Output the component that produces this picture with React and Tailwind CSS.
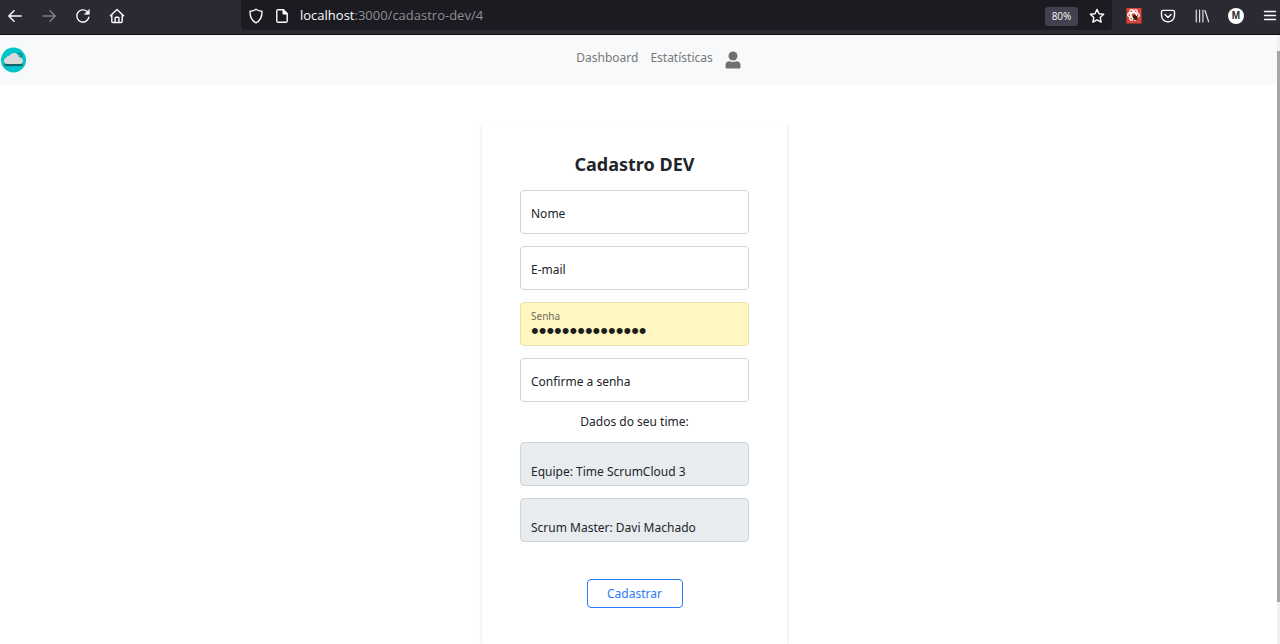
import React from "react";

const stroke = {
  fill: "none",
  stroke: "currentColor",
  strokeWidth: 1.4,
  strokeLinecap: "round",
  strokeLinejoin: "round",
};

function Icon({ children, className = "" }) {
  return (
    <svg viewBox="0 0 16 16" className={"size-4 shrink-0 " + className} {...stroke} aria-hidden="true">
      {children}
    </svg>
  );
}

function BrowserButton({ label, children, className = "" }) {
  return (
    <button type="button" aria-label={label} className={"shrink-0 text-[#fbfbfe] " + className}>
      {children}
    </button>
  );
}

function BrowserBar() {
  return (
    <header className="flex h-[35px] items-start border-b border-[#0c0c0d] bg-[#2b2a33] pr-[2px] pl-[7px]">
      <div className="flex h-8 items-center gap-[18px]">
        <BrowserButton label="Voltar">
          <Icon><path d="M14.2 8H1.8M7 2.8 1.8 8 7 13.2" /></Icon>
        </BrowserButton>
        <BrowserButton label="Avançar" className="opacity-40">
          <Icon><path d="M1.8 8h12.4M9 2.8 14.2 8 9 13.2" /></Icon>
        </BrowserButton>
        <BrowserButton label="Recarregar">
          <Icon>
            <path d="M13.9 9.2A6.1 6.1 0 1 1 12 3.4" />
            <path d="M14.3 1.7v4.6H9.7z" fill="currentColor" strokeWidth="0.6" />
          </Icon>
        </BrowserButton>
        <BrowserButton label="Início">
          <Icon>
            <path d="M1.4 7.8 8 1.4l6.6 6.4M2.8 6.8v6.5c0 .7.5 1.2 1.2 1.2h8c.7 0 1.2-.5 1.2-1.2V6.8" />
            <path d="M6.1 14.3V10c0-.5.3-.8.8-.8h2.2c.5 0 .8.3.8.8v4.3" />
          </Icon>
        </BrowserButton>
      </div>

      <div className="ml-[116px] flex h-[30px] min-w-0 flex-1 items-center rounded-b bg-[#1c1b22] pt-[2px] pr-[7px] pl-[7px] text-[#fbfbfe]">
        <Icon><path d="M8 1.2c1.8 1.3 3.8 2 6 2.1.1 5-1.3 9.3-6 11.5C3.3 12.6 1.9 8.3 2 3.3c2.2-.1 4.2-.8 6-2.1z" /></Icon>
        <Icon className="ml-[10px]">
          <path d="M9.2 1.7H4.2c-.8 0-1.4.6-1.4 1.4v9.8c0 .8.6 1.4 1.4 1.4h7.6c.8 0 1.400-.6 1.400-1.400V5.700z" />
          <path d="M9.2 1.7v4h4z" fill="currentColor" />
        </Icon>
        <div className="ml-[10px] min-w-0 flex-1 truncate font-['Open_Sans','Noto_Sans',sans-serif] text-[13px] text-[#8f8f96]">
          <span className="text-[#fbfbfe]">localhost</span>:3000/cadastro-dev/4
        </div>
        <button
          type="button"
          className="h-[19px] w-[33px] rounded-[3px] bg-[#42414d] font-['Open_Sans','Noto_Sans',sans-serif] text-[10px] text-[#fbfbfe]"
        >
          80%
        </button>
        <BrowserButton label="Adicionar aos favoritos" className="ml-[11px]">
          <Icon><path d="m8 1.4 2 4.3 4.7.6-3.5 3.2.9 4.7L8 11.9l-4.1 2.3.9-4.7L1.3 6.3 6 5.7z" /></Icon>
        </BrowserButton>
      </div>

      <div className="flex h-8 items-center gap-[18px] pl-[14px]">
        <BrowserButton label="React">
          <svg viewBox="0 0 16 16" className="size-4" aria-hidden="true">
            <rect x="0.5" y="0" width="15" height="15.5" fill="#db4437" />
            <g fill="none" stroke="#fff" strokeWidth="1.3">
              <ellipse cx="7.5" cy="7" rx="5.8" ry="2.5" />
              <ellipse cx="7.5" cy="7" rx="5.8" ry="2.5" transform="rotate(60 7.5 7)" />
              <ellipse cx="7.5" cy="7" rx="5.8" ry="2.5" transform="rotate(120 7.5 7)" />
            </g>
            <ellipse cx="9.3" cy="9.6" rx="2" ry="2.7" fill="#3a1512" transform="rotate(-30 9.3 9.6)" />
            <path d="M6.3 8.6l6 2.4M7 12l5-4M8.500 6l2.500 7" stroke="#3a1512" strokeWidth="0.7" />
          </svg>
        </BrowserButton>
        <BrowserButton label="Salvar no Pocket">
          <Icon>
            <path d="M3 2.4h10c.9 0 1.500.6 1.500 1.500v3.400C14.500 11 11.600 13.800 8 13.800S1.500 11 1.500 7.300V3.900c0-.9.6-1.500 1.500-1.500z" />
            <path d="m5 6.5 3 2.900 3-2.900" />
          </Icon>
        </BrowserButton>
        <BrowserButton label="Biblioteca">
          <Icon className="text-[#e0e0e6]"><path d="M2.3 2v12M5.6 2v12M8.9 2v12M11 2.5l3.6 11.3" strokeWidth="1.2" /></Icon>
        </BrowserButton>
        <BrowserButton label="Conta">
          <span className="flex size-4 items-center justify-center rounded-full bg-white font-['Liberation_Sans',sans-serif] text-[10px] leading-none font-bold text-[#2b2a33]">
            M
          </span>
        </BrowserButton>
        <BrowserButton label="Menu">
          <Icon><path d="M2.5 3.5h11M2.5 7.5h11M2.5 11.5h11" /></Icon>
        </BrowserButton>
      </div>
    </header>
  );
}

function SiteNav() {
  return (
    <nav className="flex h-[50px] items-center bg-[#f8f9fa]">
      <a href="#inicio" aria-label="ScrumCloud" className="w-10">
        <svg viewBox="0 0 28 28" className="size-7" aria-hidden="true">
          <circle cx="13.5" cy="14" r="12.5" fill="#00c4cc" />
          <circle cx="19.5" cy="9.5" r="2.200" fill="none" stroke="#15777d" strokeWidth="1.2" />
          <path d="M4.5 18.8h18" stroke="#15646a" strokeWidth="2.6" />
          <path d="M6.500 18a3.200 3.200 0 0 1-.5-6.200 3.500 3.500 0 0 1 3.300-2.100A5.200 5.200 0 0 1 19 11.200a3.500 3.500 0 0 1 1.500 6.800z" fill="#d9d9d9" />
        </svg>
      </a>
      <div className="flex flex-1 items-center justify-center gap-3 text-[12px] leading-5 text-[#777879]">
        <a href="#dashboard" className="pb-1">Dashboard</a>
        <a href="#estatisticas" className="pb-1">Estatísticas</a>
        <a href="#perfil" aria-label="Perfil">
          <svg viewBox="0 0 16 18" className="h-[18px] w-4" fill="#6f7071" aria-hidden="true">
            <circle cx="8" cy="5" r="4.5" />
            <path d="M4.5 10.3c2.3 1 4.7 1 7 0 2.5 0 4 1.6 4 4v1.8c0 .9-.6 1.5-1.5 1.5H2c-.9 0-1.5-.6-1.5-1.5v-1.8c0-2.4 1.5-4 4-4z" />
          </svg>
        </a>
      </div>
    </nav>
  );
}

const box = "h-11 w-full rounded border px-[10px] text-[12px] outline-none ";

function TextField({ label, type }) {
  return (
    <input
      type={type}
      aria-label={label}
      placeholder={label}
      className={box + "border-[#ced4da] bg-white pt-[2px] text-[#212529] placeholder:text-[#212529]"}
    />
  );
}

function TeamField({ label, value }) {
  return (
    <input
      readOnly
      aria-label={label}
      value={label + ": " + value}
      className={box + "border-[#ced4da] bg-[#e9ecef] pt-[14px] text-[#212529]"}
    />
  );
}

function PasswordField() {
  return (
    <div className={box + "flex flex-col justify-center border-[#ebe0a8] bg-[#fff6c2]"}>
      <label htmlFor="senha" className="text-[10px] leading-[14px] text-[#6f6d5c]">Senha</label>
      <input
        id="senha"
        type="password"
        defaultValue="scrumcloud12345"
        className="h-4 w-full bg-transparent font-['Liberation_Sans',sans-serif] text-[22px] leading-4 text-[#1d1d1b] outline-none"
      />
    </div>
  );
}

export default function App() {
  return (
    <div className="flex min-h-screen flex-col bg-white font-['Noto_Sans','Open_Sans',sans-serif] text-[#212529]">
      <BrowserBar />
      <div className="flex flex-1">
        <div className="flex min-w-0 flex-1 flex-col">
          <SiteNav />
          <main className="flex flex-1 justify-center pt-[38px] pr-2">
            <form
              onSubmit={(e) => e.preventDefault()}
              className="flex w-[305px] flex-col items-center px-[38px] pt-[27px] pb-9 shadow-[0_2px_4px_rgba(0,0,0,0.12)]"
            >
              <h1 className="text-[18px] leading-7 font-bold">Cadastro DEV</h1>
              <div className="mt-3 flex w-full flex-col gap-3">
                <TextField label="Nome" type="text" />
                <TextField label="E-mail" type="email" />
                <PasswordField />
                <TextField label="Confirme a senha" type="password" />
              </div>
              <p className="my-[10px] text-[12px] leading-5">Dados do seu time:</p>
              <div className="flex w-full flex-col gap-3">
                <TeamField label="Equipe" value="Time ScrumCloud 3" />
                <TeamField label="Scrum Master" value="Davi Machado" />
              </div>
              <button
                type="submit"
                className="mt-[37px] h-[29px] w-24 rounded border border-[#2b7bfd] text-[12px] text-[#2b7bfd]"
              >
                Cadastrar
              </button>
            </form>
          </main>
        </div>
        <div className="w-[3px] shrink-0 bg-[#f0f0f0] pt-4">
          <div className="h-[93%] bg-[#a6a6a6]" />
        </div>
      </div>
    </div>
  );
}
